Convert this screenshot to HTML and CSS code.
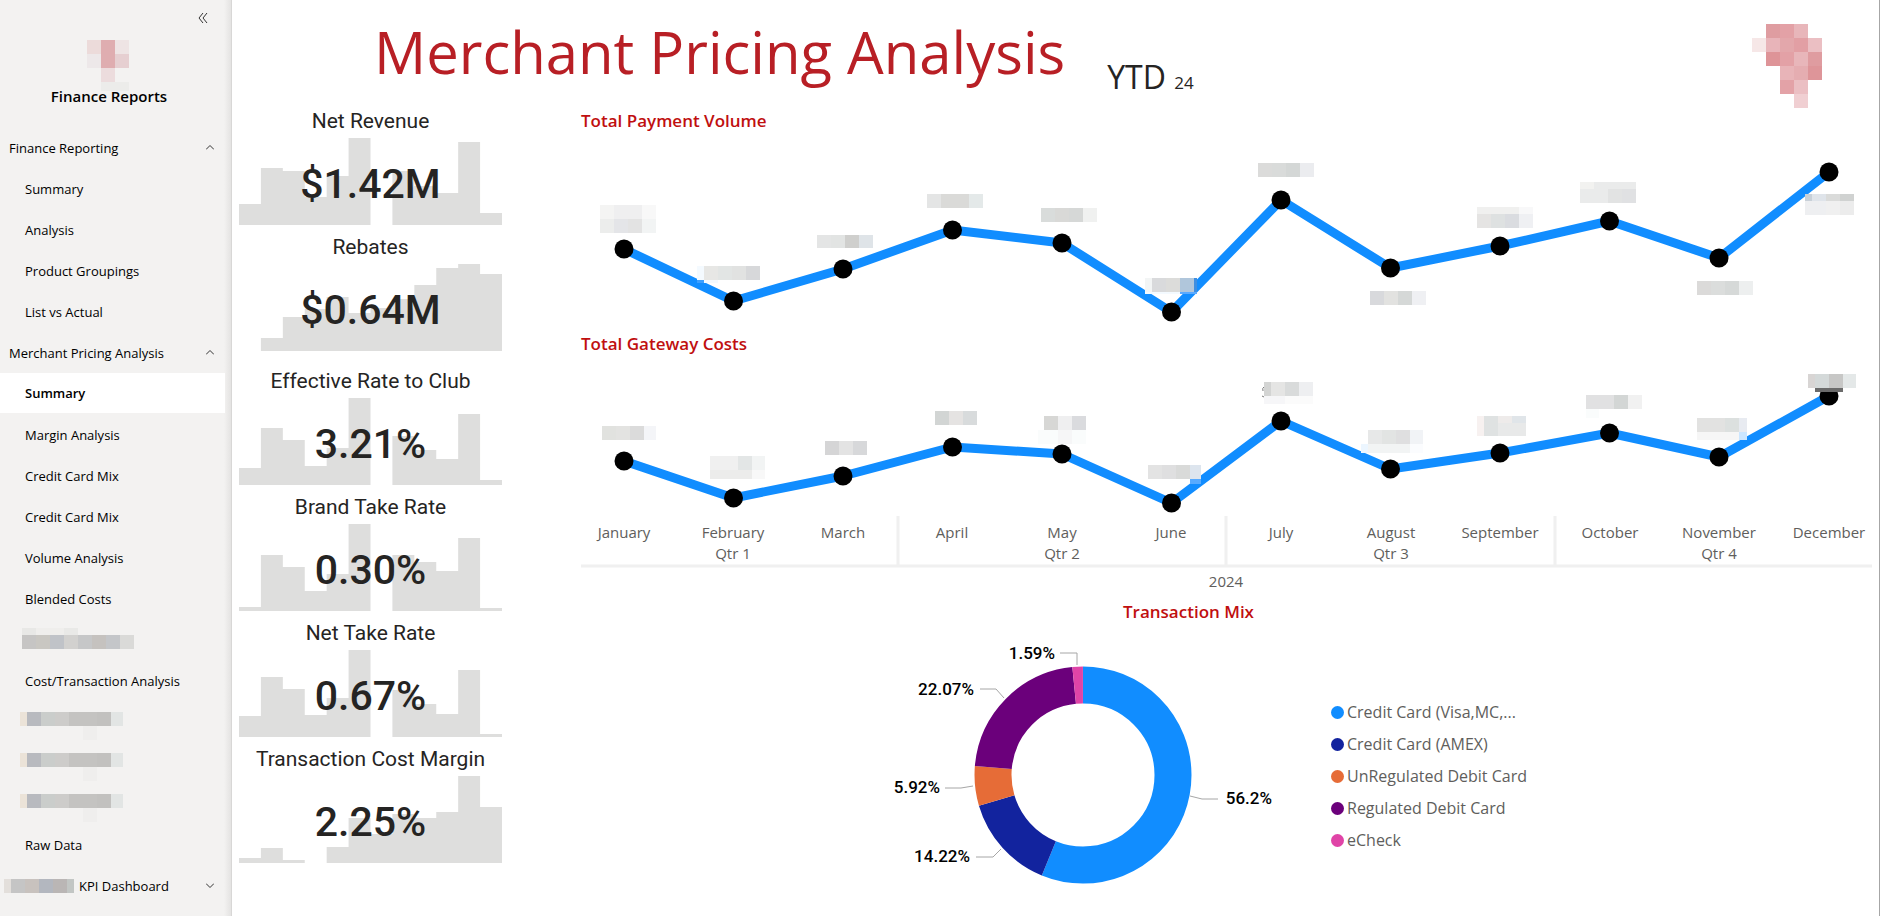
FILE: index.html
```html
<!DOCTYPE html>
<html lang="en">
<head>
<meta charset="utf-8">
<title>Merchant Pricing Analysis</title>
<link rel="stylesheet" href="styles.css">
</head>
<body>
<aside class="sidebar">
  <button class="collapse" type="button" aria-label="Collapse navigation">
    <svg width="10" height="12" viewBox="0 0 10 12"><path d="M5 1 1 6l4 5M9 1 5 6l4 5"/></svg>
  </button>
  <div class="brand">
    <svg class="brand-logo" width="42" height="51" viewBox="0 0 42 51" shape-rendering="crispEdges">
      <path fill="#ecdbda" d="M0 0h14v14H0z"/><path fill="#dfadb0" d="M14 0h14v28H14z"/><path fill="#eee4e4" d="M28 0h14v14H28z"/>
      <path fill="#ede8e9" d="M0 14h14v14H0z"/><path fill="#e6cfd1" d="M28 14h14v14H28z"/><path fill="#ecdcdd" d="M14 28h14v14H14z"/><path fill="#ececea" d="M14 42h28v9H14z"/>
    </svg>
    <div class="brand-name">Finance Reports</div>
  </div>
  <nav class="nav" aria-label="Reports">
    <button class="group" type="button" aria-expanded="true">Finance Reporting<svg class="chev" width="8" height="5" viewBox="0 0 8 5"><path d="M0 4.500 4 .5l4 4"/></svg></button>
    <a class="item" href="#">Summary</a>
    <a class="item" href="#">Analysis</a>
    <a class="item" href="#">Product Groupings</a>
    <a class="item" href="#">List vs Actual</a>
    <button class="group" type="button" aria-expanded="true">Merchant Pricing Analysis<svg class="chev" width="8" height="5" viewBox="0 0 8 5"><path d="M0 4.500 4 .5l4 4"/></svg></button>
    <a class="item current" href="#" aria-current="page">Summary</a>
    <a class="item" href="#">Margin Analysis</a>
    <a class="item" href="#">Credit Card Mix</a>
    <a class="item" href="#">Credit Card Mix</a>
    <a class="item" href="#">Volume Analysis</a>
    <a class="item" href="#">Blended Costs</a>
    <a class="item masked" href="#" aria-label="Hidden report">
      <svg width="123" height="41" viewBox="20 619 123 41" shape-rendering="crispEdges">
        <path fill="#e8e8e6" d="M22 628h14v7H22z"/><path fill="#efeeec" d="M36 628h28v7H36z"/><path fill="#e9e9e7" d="M64 628h14v7H64z"/>
        <path fill="#c6c5c4" d="M22 635h14v14H22z"/><path fill="#c9c7c2" d="M36 635h14v14H36z"/><path fill="#c0c3c8" d="M50 635h14v14H50z"/><path fill="#d2d1cf" d="M64 635h14v14H64z"/><path fill="#c6c7c8" d="M78 635h14v14H78z"/><path fill="#c5c2bf" d="M92 635h14v14H92z"/><path fill="#c4c6c9" d="M106 635h14v14h-14z"/><path fill="#dadad8" d="M120 635h14v14h-14z"/>
      </svg>
    </a>
    <a class="item" href="#">Cost/Transaction Analysis</a>
    <a class="item masked" href="#" aria-label="Hidden report">
      <svg width="123" height="41" viewBox="20 0 123 41" shape-rendering="crispEdges"><g id="strip"><path fill="#ebe3d8" d="M20 11h7v14h-7z"/><path fill="#b8babf" d="M27 11h14v14H27z"/><path fill="#cacdcb" d="M41 11h14v14H41z"/><path fill="#cdccca" d="M55 11h14v14H55z"/><path fill="#c4c3c1" d="M69 11h28v14H69z"/><path fill="#c2c1bf" d="M97 11h14v14H97z"/><path fill="#e2e5e4" d="M111 11h12v14h-12z"/><path fill="#efeeed" d="M83 25h14v14H83z"/></g></svg>
    </a>
    <a class="item masked" href="#" aria-label="Hidden report">
      <svg width="123" height="41" viewBox="20 0 123 41" shape-rendering="crispEdges"><use href="#strip"/></svg>
    </a>
    <a class="item masked" href="#" aria-label="Hidden report">
      <svg width="123" height="41" viewBox="20 0 123 41" shape-rendering="crispEdges"><use href="#strip"/></svg>
    </a>
    <a class="item" href="#">Raw Data</a>
    <button class="group last" type="button" aria-expanded="false">
      <svg class="mask" width="70" height="14" viewBox="0 0 70 14" shape-rendering="crispEdges"><path fill="#e3dfdb" d="M0 0h7v14H0z"/><path fill="#c5c5c5" d="M7 0h14v14H7z"/><path fill="#c8c2be" d="M21 0h14v14H21z"/><path fill="#b3b7bf" d="M35 0h14v14H35z"/><path fill="#bab6b5" d="M49 0h14v14H49z"/><path fill="#c2c6c4" d="M63 0h7v14h-7z"/></svg>
      KPI Dashboard<svg class="chev" width="8" height="5" viewBox="0 0 8 5"><path d="M0 .5l4 4 4-4"/></svg>
    </button>
  </nav>
</aside>

<main class="report">
  <header class="top">
    <h1>Merchant Pricing Analysis</h1>
    <div class="period">YTD <small>24</small></div>
    <svg class="logo" width="70" height="84" viewBox="0 0 70 84" shape-rendering="crispEdges">
      <path fill="#df9da1" d="M14 0h14v14H14z"/><path fill="#e3a1a6" d="M28 0h14v14H28z"/><path fill="#e8b6ba" d="M42 0h14v14H42z"/>
      <path fill="#f6e7e7" d="M0 14h14v14H0z"/><path fill="#e8b4b9" d="M14 14h14v14H14z"/><path fill="#e3a7ab" d="M28 14h14v14H28z"/><path fill="#e29fa4" d="M42 14h14v14H42z"/><path fill="#ebbfc3" d="M56 14h14v14H56z"/>
      <path fill="#de9498" d="M14 28h14v14H14z"/><path fill="#e3a1a6" d="M28 28h14v14H28z"/><path fill="#e8b6ba" d="M42 28h14v14H42z"/><path fill="#df9ca0" d="M56 28h14v14H56z"/>
      <path fill="#e8b4b8" d="M28 42h14v14H28z"/><path fill="#e5adb1" d="M42 42h14v14H42z"/><path fill="#de9599" d="M56 42h14v14H56z"/>
      <path fill="#e3a2a7" d="M28 56h14v14H28z"/><path fill="#ebbfc3" d="M42 56h14v14H42z"/><path fill="#f0cfd2" d="M42 70h14v14H42z"/>
    </svg>
  </header>

  <div class="body">
    <div class="kpis">
      <section class="kpi"><h2>Net Revenue</h2><div class="spark"><svg viewBox="0 0 12 87" preserveAspectRatio="none"><path d="M0 87V66h1V30h1v3h1v26h1V38h1V0h1v87zM7 87V33h1v15h1v7h1V4h1v71h1v12z"/></svg><strong>$1.42M</strong></div></section>
      <section class="kpi spaced"><h2>Rebates</h2><div class="spark"><svg viewBox="0 0 12 87" preserveAspectRatio="none"><path d="M1 87V74h1V53h1v-8h1V33h1v16h1v-5h1v-9h1V21h1V4h1V0h1v10h1v77z"/></svg><strong>$0.64M</strong></div></section>
      <section class="kpi"><h2>Effective Rate to Club</h2><div class="spark"><svg viewBox="0 0 12 87" preserveAspectRatio="none"><path d="M0 87V70h1V30h1v12h1v26h1V50h1V0h1v87zM7 87V38h1v14h1v9h1V16h1v66h1v5z"/></svg><strong>3.21%</strong></div></section>
      <section class="kpi"><h2>Brand Take Rate</h2><div class="spark"><svg viewBox="0 0 12 87" preserveAspectRatio="none"><path d="M0 87V83h1V31h1v12h1v24h1V50h1V0h1v87zM7 87V31h1v7h1v9h1V14h1v70h1v3z"/></svg><strong>0.30%</strong></div></section>
      <section class="kpi"><h2>Net Take Rate</h2><div class="spark"><svg viewBox="0 0 12 87" preserveAspectRatio="none"><path d="M0 87V66h1V27h1v12h1v26h1V48h1V0h1v87zM7 87V40h1v14h1v10h1V20h1v64h1v3z"/></svg><strong>0.67%</strong></div></section>
      <section class="kpi"><h2>Transaction Cost Margin</h2><div class="spark"><svg viewBox="0 0 12 87" preserveAspectRatio="none"><path d="M0 87V82h1V72h1v12h1v3zM4 87V71h1V42h1v16h1V38h1v4h1v-6h1V0h1v31h1v56z"/></svg><strong>2.25%</strong></div></section>
    </div>

    <div class="charts">
      <section>
        <h2 class="chart-title">Total Payment Volume</h2>
        <svg class="plot" viewBox="581 133 1294 190" role="img" aria-label="Total Payment Volume by month">
          <path class="line" d="M624 249 733.500 301 843 269 952.500 230 1062 243 1171.500 312 1281 200 1390.500 268 1500 246 1609.500 221 1719 258 1829 172"/>
          <g class="dots"><circle cx="624" cy="249" r="9.500"/><circle cx="733.500" cy="301" r="9.500"/><circle cx="843" cy="269" r="9.500"/><circle cx="952.500" cy="230" r="9.500"/><circle cx="1062" cy="243" r="9.500"/><circle cx="1171.500" cy="312" r="9.500"/><circle cx="1281" cy="200" r="9.500"/><circle cx="1390.500" cy="268" r="9.500"/><circle cx="1500" cy="246" r="9.500"/><circle cx="1609.500" cy="221" r="9.500"/><circle cx="1719" cy="258" r="9.500"/><circle cx="1829" cy="172" r="9.500"/></g>
          <g shape-rendering="crispEdges">
            <path fill="#f4f4f3" d="M600 205h14v14h-14z"/><path fill="#efeff0" d="M614 205h28v14h-28z"/><path fill="#f8f8f8" d="M642 205h14v14h-14z"/><path fill="#ecedec" d="M600 219h14v14h-14z"/><path fill="#e4e5e8" d="M614 219h14v14h-14z"/><path fill="#e3e3e3" d="M628 219h14v14h-14z"/><path fill="#f2f4f4" d="M642 219h14v14h-14z"/>
            <path fill="#f4faff" d="M697 266h7v14h-7zM704 280h14v3h-14z"/><path fill="#3c9fff" d="M697 280h7v3h-7z"/><path fill="#e7e7e5" d="M704 266h14v14h-14z"/><path fill="#e2e5e4" d="M718 266h14v14h-14z"/><path fill="#e1e2e1" d="M732 266h14v14h-14z"/><path fill="#d7d8da" d="M746 266h14v14h-14z"/>
            <path fill="#e4e5e5" d="M817 235h14v13h-14z"/><path fill="#e2e4e3" d="M831 235h14v13h-14z"/><path fill="#cfcfcd" d="M845 235h14v13h-14z"/><path fill="#dfe4e8" d="M859 235h14v13h-14z"/>
            <path fill="#e4e5e5" d="M927 194h14v14h-14z"/><path fill="#dadad8" d="M941 194h28v14h-28z"/><path fill="#e4e9e9" d="M969 194h14v14h-14z"/>
            <path fill="#d9dcdb" d="M1041 208h14v14h-14z"/><path fill="#d9d9d7" d="M1055 208h14v14h-14z"/><path fill="#d6d8d7" d="M1069 208h14v14h-14z"/><path fill="#f0f1f0" d="M1083 208h14v14h-14z"/>
            <path fill="#f3f5f5" d="M1145 278h7v14h-7z"/><path fill="#d9dadc" d="M1152 278h14v14h-14z"/><path fill="#dcdcda" d="M1166 278h14v14h-14z"/><path fill="#b0c6db" d="M1180 278h14v14h-14z"/><path fill="#3e8ee0" d="M1194 278h3v14h-3z"/><path fill="#f4faff" d="M1145 292h35v2h-35z"/><path fill="#5aaaff" d="M1180 292h17v2h-17z"/>
            <path fill="#dbdbda" d="M1258 163h14v14h-14z"/><path fill="#d9dbda" d="M1272 163h14v14h-14z"/><path fill="#d4d7d6" d="M1286 163h14v14h-14z"/><path fill="#ebecef" d="M1300 163h14v14h-14z"/>
            <path fill="#d8d9dc" d="M1370 291h14v14h-14z"/><path fill="#e2e2e0" d="M1384 291h14v14h-14z"/><path fill="#d5d8d7" d="M1398 291h14v14h-14z"/><path fill="#eff0f3" d="M1412 291h14v14h-14z"/>
            <path fill="#f0f0ef" d="M1477 207h42v7h-42z"/><path fill="#f8f8f9" d="M1519 207h14v7h-14z"/><path fill="#e5e4e3" d="M1477 214h14v14h-14z"/><path fill="#dee1e1" d="M1491 214h14v14h-14z"/><path fill="#dadce0" d="M1505 214h14v14h-14z"/><path fill="#eff0f3" d="M1519 214h14v14h-14z"/>
            <path fill="#f2f2f0" d="M1580 182h14v7h-14z"/><path fill="#eaebeb" d="M1594 182h42v7h-42zM1580 189h28v14h-28z"/><path fill="#e2e3e3" d="M1608 189h14v14h-14z"/><path fill="#e0e1e3" d="M1622 189h14v14h-14z"/>
            <path fill="#dbdad9" d="M1697 281h14v14h-14z"/><path fill="#dbdddc" d="M1711 281h14v14h-14z"/><path fill="#d6d9d8" d="M1725 281h14v14h-14z"/><path fill="#edefef" d="M1739 281h14v14h-14z"/>
            <path fill="#c8d0d8" d="M1805 194h7v7h-7z"/><path fill="#dfe4ea" d="M1812 194h14v7h-14z"/><path fill="#dadbda" d="M1826 194h14v7h-14z"/><path fill="#d0d2d1" d="M1840 194h14v7h-14z"/><path fill="#eeeff1" d="M1805 201h21v14h-21z"/><path fill="#f0f0f0" d="M1826 201h14v14h-14z"/><path fill="#ececec" d="M1840 201h14v14h-14z"/>
          </g>
        </svg>
      </section>
      <section class="costs">
        <h2 class="chart-title">Total Gateway Costs</h2>
        <svg class="plot" viewBox="581 356 1294 236" role="img" aria-label="Total Gateway Costs by month">
          <path class="axis" d="M581 566H1872M898 516v50M1226 516v50M1555 516v50"/>
          <path class="line" d="M624 461 733.500 498 843 476 952.500 447 1062 454 1171.500 503 1281 421 1390.500 469 1500 453 1609.500 433 1719 457 1829 396"/>
          <g class="dots"><circle cx="624" cy="461" r="9.500"/><circle cx="733.500" cy="498" r="9.500"/><circle cx="843" cy="476" r="9.500"/><circle cx="952.500" cy="447" r="9.500"/><circle cx="1062" cy="454" r="9.500"/><circle cx="1171.500" cy="503" r="9.500"/><circle cx="1281" cy="421" r="9.500"/><circle cx="1390.500" cy="469" r="9.500"/><circle cx="1500" cy="453" r="9.500"/><circle cx="1609.500" cy="433" r="9.500"/><circle cx="1719" cy="457" r="9.500"/><circle cx="1829" cy="396" r="9.500"/></g>
          <path d="M1264 387q-2 1-1 4M1262 396l2 1" fill="none" stroke="#777"/>
          <g shape-rendering="crispEdges">
            <path fill="#e1e2df" d="M602 426h14v14h-14z"/><path fill="#e3e3e1" d="M616 426h14v14h-14z"/><path fill="#dbdbdb" d="M630 426h14v14h-14z"/><path fill="#f4f5f8" d="M644 426h12v14h-12z"/>
            <path fill="#f0f0f0" d="M710 456h28v14h-28z"/><path fill="#e3e6e6" d="M738 456h14v14h-14z"/><path fill="#f2f4f4" d="M752 456h13v14h-13z"/><path fill="#ececeb" d="M710 470h42v9h-42z"/><path fill="#f8f8f8" d="M752 470h13v9h-13z"/>
            <path fill="#d5d5d6" d="M825 441h14v14h-14z"/><path fill="#e3e3e3" d="M839 441h14v14h-14z"/><path fill="#d7d8da" d="M853 441h14v14h-14z"/>
            <path fill="#d2d5d4" d="M935 411h14v14h-14z"/><path fill="#e5e3e2" d="M949 411h14v14h-14z"/><path fill="#d8dbdc" d="M963 411h14v14h-14z"/>
            <path fill="#d7d7d5" d="M1044 416h14v14h-14z"/><path fill="#efeff0" d="M1058 416h14v14h-14z"/><path fill="#dadbde" d="M1072 416h14v14h-14z"/><path fill="#fafcfc" d="M1038 430h48v14h-48z"/><path fill="#f6f6f7" d="M1058 430h14v14h-14z"/>
            <path fill="#e3e3e3" d="M1148 465h14v14h-14z"/><path fill="#dfdfe0" d="M1162 465h14v14h-14z"/><path fill="#d9dad9" d="M1176 465h14v14h-14z"/><path fill="#dde5ee" d="M1190 465h11v14h-11z"/><path fill="#57aaff" d="M1190 479h11v5h-11z"/>
            <path fill="#d3d4d3" d="M1264 382h7v14h-7z"/><path fill="#e5e5e4" d="M1271 382h14v14h-14z"/><path fill="#d9dbdb" d="M1285 382h14v14h-14z"/><path fill="#eeeff1" d="M1299 382h14v14h-14z"/><path fill="#f6f6f8" d="M1264 396h21v8h-21z"/><path fill="#fbfbfb" d="M1285 396h28v8h-28z"/>
            <path fill="#e7e8e8" d="M1368 430h14v14h-14z"/><path fill="#e2e4e3" d="M1382 430h14v14h-14z"/><path fill="#dfdfe0" d="M1396 430h14v14h-14z"/><path fill="#f1f3f6" d="M1410 430h13v14h-13z"/><path fill="#ecf6ff" d="M1361 444h7v9h-7z"/><path fill="#f2f4f4" d="M1368 444h42v9h-42z"/><path fill="#fbfcfe" d="M1410 444h13v9h-13z"/>
            <path fill="#f7f1f0" d="M1477 416h7v20h-7z"/><path fill="#dfe2e2" d="M1484 416h14v20h-14z"/><path fill="#eeebea" d="M1498 416h14v7h-14z"/><path fill="#e0e5e9" d="M1512 416h14v7h-14z"/><path fill="#e8e9e9" d="M1498 423h28v13h-28z"/>
            <path fill="#e1e1e2" d="M1586 395h28v14h-28z"/><path fill="#d3d6d5" d="M1614 395h14v14h-14z"/><path fill="#f1f1f1" d="M1628 395h14v14h-14z"/><path fill="#fafcfc" d="M1586 409h13v9h-13z"/>
            <path fill="#e2e2e1" d="M1697 418h28v14h-28z"/><path fill="#dce0df" d="M1725 418h14v14h-14z"/><path fill="#e8ebf1" d="M1739 418h8v14h-8z"/><path fill="#f6f6f6" d="M1697 432h42v8h-42z"/><path fill="#cbe6ff" d="M1739 432h8v8h-8z"/>
            <path fill="#d8d5d4" d="M1808 374h7v14h-7z"/><path fill="#d4d9d9" d="M1815 374h14v14h-14z"/><path fill="#c7c7c6" d="M1829 374h14v14h-14z"/><path fill="#e4e8e8" d="M1843 374h13v14h-13z"/><path fill="#6b6b6b" d="M1815 388h28v4h-28z"/>
          </g>
          <g class="tick"><text x="624" y="538">January</text><text x="733" y="538">February</text><text x="843" y="538">March</text><text x="952" y="538">April</text><text x="1062" y="538">May</text><text x="1171" y="538">June</text><text x="1281" y="538">July</text><text x="1391" y="538">August</text><text x="1500" y="538">September</text><text x="1610" y="538">October</text><text x="1719" y="538">November</text><text x="1829" y="538">December</text>
          <text x="733" y="559">Qtr 1</text><text x="1062" y="559">Qtr 2</text><text x="1391" y="559">Qtr 3</text><text x="1719" y="559">Qtr 4</text><text x="1226" y="587">2024</text></g>
        </svg>
      </section>
      <section class="mix">
        <h2 class="chart-title">Transaction Mix</h2>
        <div class="mix-body">
          <svg width="390" height="256" viewBox="888 635 390 256" role="img" aria-label="Transaction mix donut">
            <g class="ring" transform="rotate(-90 1083 775)">
              <circle cx="1083" cy="775" r="90" pathLength="100" stroke="#118dff" stroke-dasharray="56.2 43.8"/>
              <circle cx="1083" cy="775" r="90" pathLength="100" stroke="#12239e" stroke-dasharray="0 56.2 14.22 50"/>
              <circle cx="1083" cy="775" r="90" pathLength="100" stroke="#e66c37" stroke-dasharray="0 70.42 5.92 50"/>
              <circle cx="1083" cy="775" r="90" pathLength="100" stroke="#6b007b" stroke-dasharray="0 76.34 22.07 50"/>
              <circle cx="1083" cy="775" r="90" pathLength="100" stroke="#e044a7" stroke-dasharray="0 98.41 1.58 50"/>
            </g>
            <path class="lead" d="M1060 653h17v12M980 689h16l8 9M945 788h16l12-2M976 857h17l8-8M1190 796l12 3h16"/>
            <g class="pct"><text x="1055" y="659">1.59%</text><text x="974" y="695">22.07%</text><text x="940" y="793">5.92%</text><text x="970" y="862">14.22%</text><text x="1272" y="804">56.2%</text></g>
          </svg>
          <ul class="legend">
            <li><i class="c1"></i>Credit Card (Visa,MC,...</li>
            <li><i class="c2"></i>Credit Card (AMEX)</li>
            <li><i class="c3"></i>UnRegulated Debit Card</li>
            <li><i class="c4"></i>Regulated Debit Card</li>
            <li><i class="c5"></i>eCheck</li>
          </ul>
        </div>
      </section>
    </div>
  </div>
</main>
</body>
</html>
```
FILE: styles.css
```css
* { box-sizing: border-box; }

body {
  margin: 0;
  display: flex;
  min-height: 100vh;
  padding-right: 3px;
  background: #fff;
  font-family: "Open Sans", "Noto Sans", sans-serif;
  color: #000;
}

h1, h2, ul { margin: 0; padding: 0; font-weight: 400; }
svg { display: block; }
button { border: 0; background: none; font: inherit; color: inherit; cursor: pointer; }

/* Sidebar */
.sidebar {
  flex: none;
  width: 232px;
  background: linear-gradient(to right, #f3f2f1 224px, #e4e3e2 231px, #cccbca);
}
.collapse { display: block; margin-left: 198px; margin-top: 12px; padding: 0; height: 12px; }
.collapse path, .chev path { fill: none; stroke: #333; }
.brand { width: 218px; padding-top: 16px; text-align: center; }
.brand-logo { margin-left: 87px; }
.brand-name { margin-top: -5px; font-size: 15px; line-height: 20px; font-weight: 600; height: 41px; }
.nav { display: flex; flex-direction: column; }
.item, .group {
  display: flex;
  align-items: center;
  height: 41px;
  width: 225px;
  font-size: 13px;
  text-align: left;
  color: #000;
  text-decoration: none;
}
.item { padding: 0 0 0 25px; }
.group { padding: 0 11px 0 9px; }
.chev { margin-left: auto; }
.current { background: #fff; font-weight: 600; height: 40px; margin-bottom: 1px; }
.masked { padding: 0 0 0 20px; }
.last { padding-left: 4px; }
.mask { margin-right: 5px; }

/* Report page */
.report {
  flex: 1;
  min-width: 0;
  padding: 0 4px 0 7px;
  border-right: 1px solid #a6a6a6;
}
.top { display: flex; height: 109px; padding: 0 53px 0 135px; }
h1 { font-size: 58px; line-height: 104px; color: #b81f25; white-space: nowrap; }
.period { margin: 57px auto 0 42px; font-size: 32px; line-height: 40px; color: #252423; }
.period small { font-size: 17px; }
.logo { margin-top: 24px; }
.body { display: flex; gap: 79px; }

/* KPI cards */
.kpis { flex: none; width: 263px; }
.kpi { margin-bottom: 10px; text-align: center; color: #252423; font-family: Roboto, sans-serif; }
.kpi.spaced { margin-bottom: 18px; }
.kpi h2 { margin-bottom: 5px; font-size: 21px; line-height: 24px; white-space: nowrap; }
.spark { display: grid; height: 87px; }
.spark > * { grid-area: 1 / 1; }
.spark svg { width: 100%; height: 87px; fill: #dededd; }
.spark strong { font-size: 41px; line-height: 92px; font-weight: 500; }

/* Charts */
.charts { flex: 1; min-width: 0; }
.chart-title { font-size: 17px; line-height: 24px; font-weight: 600; color: #c00f0f; }
.plot { width: 100%; height: auto; }
.costs .chart-title { margin-top: 9px; }
.line { fill: none; stroke: #118dff; stroke-width: 9; stroke-linejoin: round; }
.axis { fill: none; stroke: #f0f0f0; stroke-width: 3; }
.tick text { font-size: 15px; fill: #605e5c; text-anchor: middle; }
.mix .chart-title { margin-top: 8px; padding-right: 79px; text-align: center; }
.mix-body { display: flex; align-items: center; gap: 53px; padding-left: 307px; margin-top: 11px; }
.ring { fill: none; stroke-width: 37; }
.lead { fill: none; stroke: #a6a6a6; }
.pct text { font: 500 17px Roboto, sans-serif; text-anchor: end; }
.legend { padding-top: 26px; list-style: none; font-size: 16px; line-height: 32px; color: #605e5c; }
.legend li { display: flex; align-items: center; gap: 3px; }
.legend i { width: 13px; height: 13px; border-radius: 50%; }
.c1 { background: #118dff; }
.c2 { background: #12239e; }
.c3 { background: #e66c37; }
.c4 { background: #6b007b; }
.c5 { background: #e044a7; }
```
